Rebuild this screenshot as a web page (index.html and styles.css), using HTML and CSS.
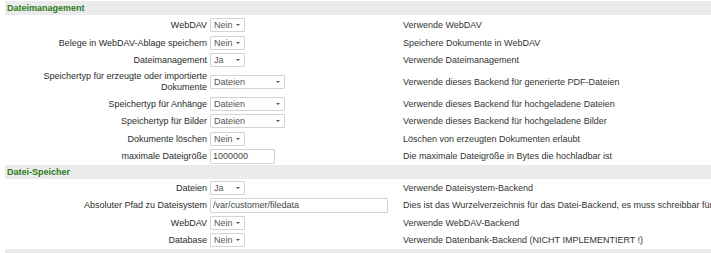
FILE: index.html
```
<!DOCTYPE html>
<html lang="de">
<head>
    <meta charset="UTF-8">
    <title>Dateimanagement</title>
    <link rel="stylesheet" href="styles.css">
</head>
<body>

    <table class="settings">
        <colgroup>
            <col class="col-label">
            <col class="col-input">
            <col class="col-desc">
        </colgroup>

        <!-- Dateimanagement -->
        <tr class="section">
            <td colspan="3">Dateimanagement</td>
        </tr>
        <tr>
            <td class="label">WebDAV</td>
            <td><span class="select short"><select><option>Nein</option></select></span></td>
            <td class="desc">Verwende WebDAV</td>
        </tr>
        <tr>
            <td class="label">Belege in WebDAV-Ablage speichern</td>
            <td><span class="select short"><select><option>Nein</option></select></span></td>
            <td class="desc">Speichere Dokumente in WebDAV</td>
        </tr>
        <tr>
            <td class="label">Dateimanagement</td>
            <td><span class="select short"><select><option>Ja</option></select></span></td>
            <td class="desc">Verwende Dateimanagement</td>
        </tr>
        <tr class="tall">
            <td class="label">Speichertyp für erzeugte oder importierte Dokumente</td>
            <td><span class="select long"><select><option>Dateien</option></select></span></td>
            <td class="desc">Verwende dieses Backend für generierte PDF-Dateien</td>
        </tr>
        <tr>
            <td class="label">Speichertyp für Anhänge</td>
            <td><span class="select long"><select><option>Dateien</option></select></span></td>
            <td class="desc">Verwende dieses Backend für hochgeladene Dateien</td>
        </tr>
        <tr>
            <td class="label">Speichertyp für Bilder</td>
            <td><span class="select long"><select><option>Dateien</option></select></span></td>
            <td class="desc">Verwende dieses Backend für hochgeladene Bilder</td>
        </tr>
        <tr>
            <td class="label">Dokumente löschen</td>
            <td><span class="select short"><select><option>Nein</option></select></span></td>
            <td class="desc">Löschen von erzeugten Dokumenten erlaubt</td>
        </tr>
        <tr>
            <td class="label">maximale Dateigröße</td>
            <td><input type="text" class="field size" value="1000000"></td>
            <td class="desc">Die maximale Dateigröße in Bytes die hochladbar ist</td>
        </tr>

        <!-- Datei-Speicher -->
        <tr class="section">
            <td colspan="3">Datei-Speicher</td>
        </tr>
        <tr>
            <td class="label">Dateien</td>
            <td><span class="select short"><select><option>Ja</option></select></span></td>
            <td class="desc">Verwende Dateisystem-Backend</td>
        </tr>
        <tr>
            <td class="label">Absoluter Pfad zu Dateisystem</td>
            <td><input type="text" class="field path" value="/var/customer/filedata"></td>
            <td class="desc">Dies ist das Wurzelverzeichnis für das Datei-Backend, es muss schreibbar für den Webserver sein</td>
        </tr>
        <tr>
            <td class="label">WebDAV</td>
            <td><span class="select short"><select><option>Nein</option></select></span></td>
            <td class="desc">Verwende WebDAV-Backend</td>
        </tr>
        <tr>
            <td class="label">Database</td>
            <td><span class="select short"><select><option>Nein</option></select></span></td>
            <td class="desc">Verwende Datenbank-Backend (NICHT IMPLEMENTIERT !)</td>
        </tr>

        <tr class="section">
            <td colspan="3">&nbsp;</td>
        </tr>
    </table>

</body>
</html>
```

FILE: styles.css
```
/* ===== General ===== */
html, body {
    overflow: hidden;
}

body {
    margin: 0;
    padding: 0;
    background: #ffffff;
    font-family: 'Liberation Sans', Arial, sans-serif;
    font-size: 9px;
    color: #333;
}

/* ===== Settings table ===== */
.settings {
    border-collapse: collapse;
    table-layout: fixed;
    width: 820px;
    margin: 1px 0 0 5px;
}

.col-label {
    width: 205px;
}

.col-input {
    width: 193px;
}

.settings td {
    height: 17.5px;
    padding: 0;
    vertical-align: middle;
    white-space: nowrap;
}

.settings td.label {
    text-align: right;
    padding-right: 3px;
    color: #2b2b2b;
    white-space: normal;
}

.settings tr:nth-child(2) td {
    height: 19px;
}

.settings tr.tall td {
    height: 26px;
    line-height: 11px;
}

/* ===== Section headers ===== */
.settings tr.section td {
    height: 14px;
    background: #ebebeb;
    color: #2a7a19;
    font-weight: bold;
    padding-left: 2px;
}

/* ===== Form elements ===== */
.select {
    position: relative;
    display: inline-block;
    vertical-align: middle;
}

.select select {
    -webkit-appearance: none;
    appearance: none;
    height: 14px;
    margin: 0;
    padding: 0 0 0 3px;
    border: 1px solid #d3d3d3;
    border-radius: 1px;
    background: #fff;
    font-family: inherit;
    font-size: 9px;
    color: #555;
    line-height: 12px;
}

.select.short select {
    width: 35px;
}

.select.long select {
    width: 75px;
}

.select::after {
    content: "";
    position: absolute;
    right: 5px;
    top: 6px;
    border-left: 2px solid transparent;
    border-right: 2px solid transparent;
    border-top: 2px solid #555;
    pointer-events: none;
}

.field {
    box-sizing: border-box;
    height: 15px;
    margin: 0;
    padding: 0 2px;
    border: 1px solid #d3d3d3;
    border-radius: 1px;
    font-family: inherit;
    font-size: 9px;
    color: #444;
    vertical-align: middle;
}

.field.size {
    width: 65px;
}

.field.path {
    width: 178px;
}
```
